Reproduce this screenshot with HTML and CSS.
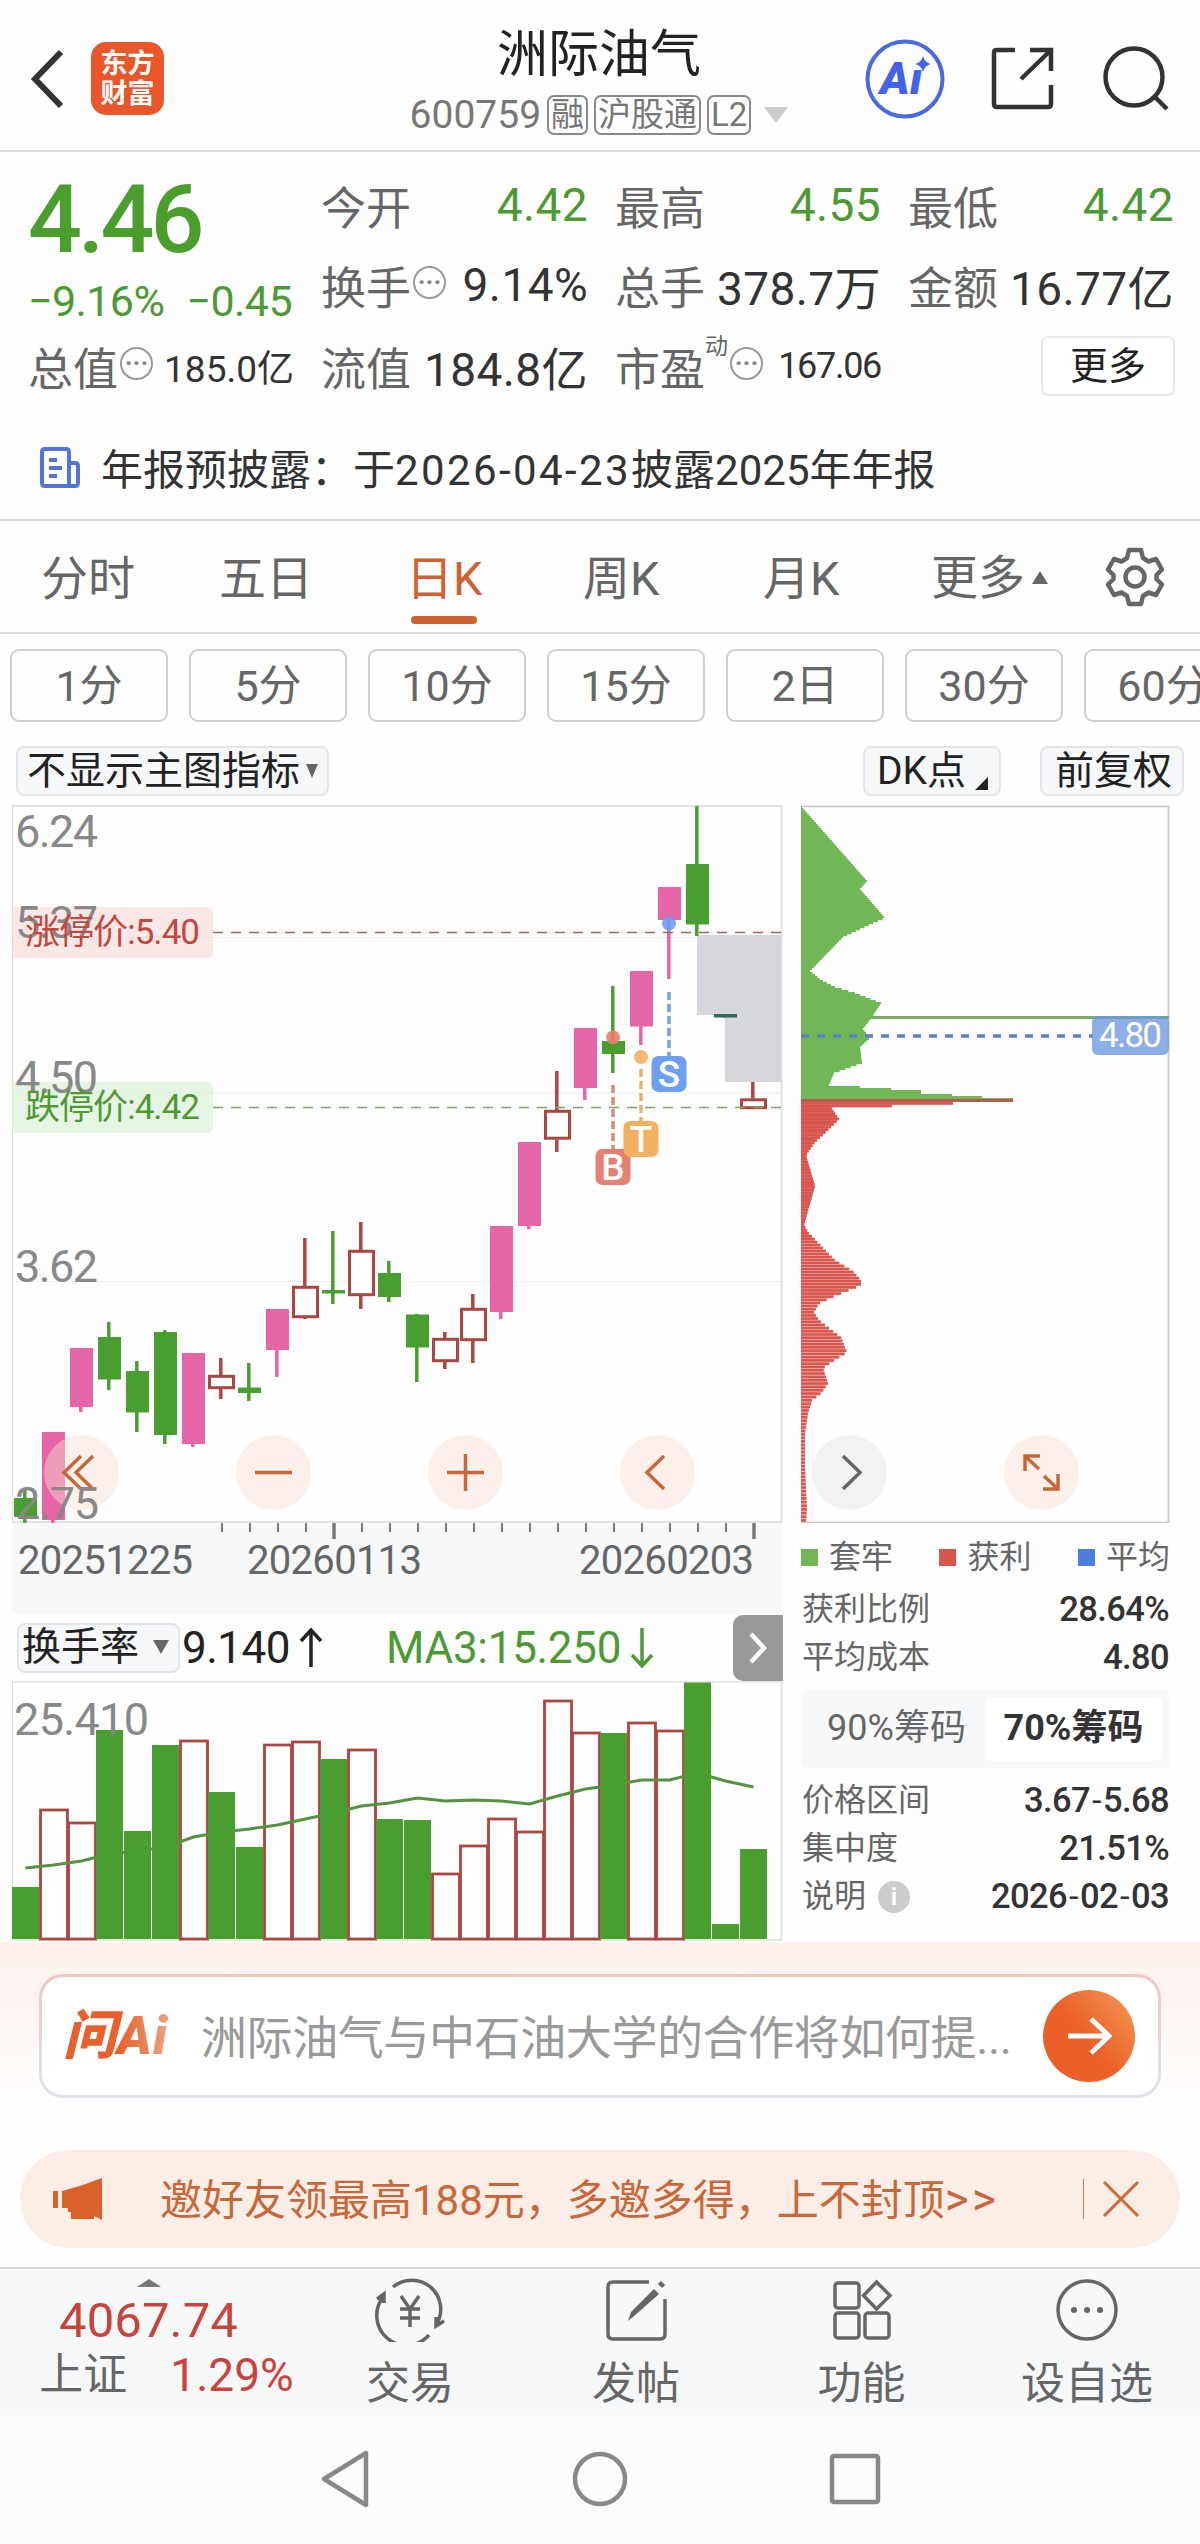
FILE: index.html
```
<!DOCTYPE html>
<html lang="zh-CN">
<head>
    <meta charset="UTF-8">
    <meta name="viewport" content="width=device-width, initial-scale=1.0">
    <title>洲际油气 600759</title>
    <link rel="stylesheet" href="styles.css">
</head>
<body>
    <!-- Header -->
    <header class="header">
        <svg class="back" width="36" height="60" viewBox="0 0 36 60"><path d="M31 3 L5 30 L31 57"/></svg>
        <div class="logo"><span>东方</span><span>财富</span></div>
        <div class="stock">
            <div class="stock-name">洲际油气</div>
            <div class="stock-code">
                <span class="code">600759</span>
                <span class="tag">融</span>
                <span class="tag">沪股通</span>
                <span class="tag">L2</span>
                <svg class="caret" width="24" height="16" viewBox="0 0 24 16"><path d="M0 0H24L12 16Z"/></svg>
            </div>
        </div>
        <div class="header-icons">
            <svg width="80" height="80" viewBox="0 0 80 80">
                <circle cx="40" cy="40" r="37.5" fill="none" stroke="#4a6be0" stroke-width="4"/>
                <text class="ai-text" x="15" y="55">Aı</text>
                <path d="M58 17 Q59.500 23.500 66 25 Q59.500 26.500 58 33 Q56.500 26.500 50 25 Q56.500 23.500 58 17Z" fill="#4262ea"/>
            </svg>
            <svg class="line-icon" width="66" height="66" viewBox="0 0 66 66">
                <path d="M25 4H7Q4 4 4 7V58Q4 61 7 61H58Q61 61 61 58V39M40 4H61V25M61 4L31 33"/>
            </svg>
            <svg class="line-icon" width="68" height="66" viewBox="0 0 68 66">
                <circle cx="32" cy="31" r="28.500"/><path d="M53 51L65 63"/>
            </svg>
        </div>
    </header>

    <!-- Quote -->
    <section class="quote">
        <div class="quote-main">
            <div class="price">4.46</div>
            <div class="change"><span>−9.16%</span><span>−0.45</span></div>
        </div>
        <div class="cell"><label>今开</label><b class="green">4.42</b></div>
        <div class="cell"><label>最高</label><b class="green">4.55</b></div>
        <div class="cell"><label>最低</label><b class="green">4.42</b></div>
        <div class="cell"><label>换手</label><i class="dots">···</i><b>9.14%</b></div>
        <div class="cell"><label>总手</label><b>378.7万</b></div>
        <div class="cell"><label>金额</label><b>16.77亿</b></div>
        <div class="cell small"><label>总值</label><i class="dots">···</i><b>185.0亿</b></div>
        <div class="cell"><label>流值</label><b>184.8亿</b></div>
        <div class="cell small pe"><label>市盈<sup>动</sup></label><i class="dots">···</i><b>167.06</b></div>
        <div class="cell"><button class="more">更多</button></div>
    </section>
    <div class="notice">
        <svg width="40" height="42" viewBox="0 0 40 42">
            <path d="M29 39V5Q29 2 26 2H5Q2 2 2 5V36Q2 39 5 39H35Q38 39 38 36V19Q38 16 35 16H29M9 13H17M9 21H22M9 29H17"/>
        </svg>
        <span>年报预披露：于<em>2026-04-23</em>披露2025年年报</span>
    </div>

    <!-- Period tabs -->
    <nav class="tabs">
        <span>分时</span>
        <span>五日</span>
        <span class="active">日K</span>
        <span>周K</span>
        <span>月K</span>
        <span class="tab-more">更多<svg width="16" height="13" viewBox="0 0 16 13"><path d="M8 0L16 13H0Z" fill="#666"/></svg></span>
        <svg class="gear" width="60" height="60" viewBox="0 0 60 60">
            <path d="M24 3H36L38 11L43.500 14.500L51 12L57 22.500L51.500 28V32L57 37.500L51 48L43.500 45.500L38 49L36 57H24L22 49L16.500 45.500L9 48L3 37.500L8.500 32V28L3 22.500L9 12L16.500 14.500L22 11Z"/>
            <circle cx="30" cy="30" r="9.500"/>
        </svg>
    </nav>
    <div class="pills">
        <span>1分</span><span>5分</span><span>10分</span><span>15分</span><span>2日</span><span>30分</span><span>60分</span>
    </div>
    <div class="indicators">
        <span class="chip">不显示主图指标<svg width="12" height="14" viewBox="0 0 12 14"><path d="M0 0H12L6 14Z" fill="#666"/></svg></span>
        <span class="chip dk">DK点<svg width="13" height="13" viewBox="0 0 13 13"><path d="M13 0V13H0Z" fill="#222"/></svg></span>
        <span class="chip fq">前复权</span>
    </div>

    <!-- Charts -->
    <main class="charts">
        <div class="left">
            <svg class="kline" id="kline" width="771" height="718" viewBox="12 805 771 718"></svg>
            <svg class="axis" id="axis" width="771" height="91" viewBox="12 1523 771 91"></svg>
            <div class="turnover">
                <span class="chip">换手率<svg width="16" height="14" viewBox="0 0 16 14"><path d="M0 0H16L8 14Z" fill="#666"/></svg></span>
                <span class="rate">9.140</span>
                <svg class="arrow" width="24" height="42" viewBox="0 0 24 42"><path d="M12 40V4M2 14L12 3L22 14" stroke="#222"/></svg>
                <span class="ma">MA3:15.250</span>
                <svg class="arrow" width="24" height="42" viewBox="0 0 24 42"><path d="M12 1V38M2 28L12 39L22 28" stroke="#4d9a35"/></svg>
                <div class="next"><svg width="18" height="32" viewBox="0 0 18 32"><path d="M2 2L15 16L2 30"/></svg></div>
            </div>
            <svg class="volume" id="volume" width="771" height="261" viewBox="12 1681 771 261"></svg>
        </div>
        <div class="right">
            <svg id="chips" width="370" height="718" viewBox="801 805 370 718"></svg>
            <div class="legend">
                <span><i class="sq g"></i>套牢</span>
                <span><i class="sq r"></i>获利</span>
                <span><i class="sq b"></i>平均</span>
            </div>
            <div class="row"><span>获利比例</span><b>28.64%</b></div>
            <div class="row"><span>平均成本</span><b>4.80</b></div>
            <div class="toggle"><span>90%筹码</span><span class="on">70%筹码</span></div>
            <div class="row"><span>价格区间</span><b>3.67<u>-</u>5.68</b></div>
            <div class="row"><span>集中度</span><b>21.51%</b></div>
            <div class="row"><span>说明<i class="info">i</i></span><b>2026<u>-</u>02<u>-</u>03</b></div>
        </div>
        <!-- Buttons floating over both charts -->
        <div class="tools">
            <svg viewBox="0 0 75 75"><path d="M37 21L20 37.500L37 54M49 21L32 37.500L49 54"/></svg>
            <svg viewBox="0 0 75 75"><path d="M19 37.500H56"/></svg>
            <svg viewBox="0 0 75 75"><path d="M19 37.500H56M37.500 19V56"/></svg>
            <svg viewBox="0 0 75 75"><path d="M44 21L27 37.500L44 54"/></svg>
            <svg class="grey" viewBox="0 0 75 75"><path d="M31 21L48 37.500L31 54"/></svg>
            <svg viewBox="0 0 75 75"><path d="M21 36V21H36M22 22L35 34M54 39V54H39M53 53L40 41"/></svg>
        </div>
        <div class="low">2.75</div>
    </main>

    <!-- Ask AI -->
    <section class="ask">
        <div class="ask-box">
            <span class="ask-logo">问Ai</span>
            <span class="ask-text">洲际油气与中石油大学的合作将如何提...</span>
            <div class="ask-go"><svg width="46" height="40" viewBox="0 0 46 40"><path d="M2 20H42M25 3L43 20L25 37"/></svg></div>
        </div>
    </section>

    <div class="banner">
        <svg class="horn" width="52" height="44" viewBox="0 0 52 44"><path d="M1 14H6V31H1ZM10 14L28 9L50 1V43L42 39V42H19V35H16V31H10Z"/></svg>
        <span class="banner-text">邀好友领最高188元，多邀多得，上不封顶<u>&gt;&gt;</u></span>
        <i class="sep"></i>
        <svg class="close" width="38" height="36" viewBox="0 0 38 36"><path d="M2 1L36 35M36 1L2 35"/></svg>
    </div>

    <!-- Bottom bar -->
    <footer class="bottom">
        <div class="index">
            <svg width="24" height="8" viewBox="0 0 24 8"><path d="M12 0L24 8H0Z" fill="#777"/></svg>
            <div class="index-value">4067.74</div>
            <div class="index-row"><span>上证</span><span class="red">1.29%</span></div>
        </div>
        <div class="item">
            <svg width="72" height="64" viewBox="0 0 72 64">
                <path d="M19 9A29 29 0 0 1 62 47M55 57A29 29 0 0 1 10 18M3 21L10 16V25M70 43L62 48V39"/>
                <path d="M27 18L36 31L45 18M36 31V49M26 31H46M26 40H46"/>
            </svg>
            <span>交易</span>
        </div>
        <div class="item">
            <svg width="64" height="64" viewBox="0 0 64 64">
                <path d="M45 4H9Q4 4 4 9V56Q4 61 9 61H56Q61 61 61 56V21"/>
                <path d="M24 43L27 34L50 11L55 16L29 39Z" fill="#666" stroke="none"/><path d="M56 8L59 5" stroke-width="6"/>
            </svg>
            <span>发帖</span>
        </div>
        <div class="item">
            <svg width="64" height="64" viewBox="0 0 64 64">
                <rect x="5" y="5" width="24" height="25" rx="3"/><rect x="5" y="35" width="24" height="25" rx="3"/><rect x="35" y="35" width="24" height="25" rx="3"/>
                <path d="M46.500 4L60 17.500L46.500 31L33.500 17.500Z"/>
            </svg>
            <span>功能</span>
        </div>
        <div class="item">
            <svg width="64" height="64" viewBox="0 0 64 64">
                <circle cx="32" cy="32" r="29"/>
                <path d="M19 32h.1M32 32h.1M45 32h.1" stroke-width="6" stroke-linecap="round"/>
            </svg>
            <span>设自选</span>
        </div>
    </footer>
    <div class="sysnav">
        <svg width="56" height="60" viewBox="0 0 56 60"><path d="M50 4V56L8 30Z"/></svg>
        <svg width="56" height="60" viewBox="0 0 56 60"><circle cx="28" cy="30" r="25"/></svg>
        <svg width="56" height="60" viewBox="0 0 56 60"><rect x="4" y="7" width="46" height="46" rx="2"/></svg>
    </div>

    <script src="script.js"></script>
</body>
</html>
```
FILE: styles.css
```
* {
    box-sizing: border-box;
}

body {
    margin: 0;
    width: 1200px;
    height: 2544px;
    overflow: hidden;
    background: #fefefe;
    color: #333;
    font-family: Roboto, "Noto Sans CJK SC", sans-serif;
}

svg {
    display: block;
    flex: none;
}

b, i, em, u {
    font-weight: normal;
    font-style: normal;
    text-decoration: none;
}

.green {
    color: #4d9a35;
}

.red {
    color: #c9433b;
}

/* header */
.header {
    display: grid;
    grid-template-columns: 61px 249px 518px 1fr;
    height: 152px;
    padding-left: 30px;
    border-bottom: 2px solid #dadada;
}

.back {
    margin-top: 49px;
    fill: none;
    stroke: #333;
    stroke-width: 6;
}

.logo {
    display: flex;
    flex-direction: column;
    justify-content: center;
    align-items: center;
    width: 73px;
    height: 73px;
    margin-top: 42px;
    border-radius: 15px;
    background: #e8562a;
    color: #fff;
    font-size: 27px;
    font-weight: bold;
    line-height: 30px;
}

.stock {
    display: flex;
    flex-direction: column;
    align-items: center;
    padding-top: 25px;
}

.stock-name {
    font-size: 51px;
    line-height: 60px;
    color: #222;
}

.stock-code {
    display: flex;
    align-items: center;
    gap: 6px;
    margin-top: 10px;
    height: 40px;
    color: #777;
}

.code {
    font-size: 39px;
}

.tag {
    height: 40px;
    padding: 0 2px;
    border: 2px solid #888;
    border-radius: 7px;
    font-size: 33px;
    line-height: 35px;
}

.caret {
    margin-left: 7px;
    fill: #ccc;
}

.header-icons {
    display: flex;
    align-items: center;
    gap: 45px;
    padding: 7px 0 0 7px;
}

.header-icons svg:last-child {
    margin-left: 1px;
}

.ai-text {
    font-family: Roboto;
    font-size: 45px;
    font-weight: 900;
    font-style: italic;
    fill: #4262ea;
}

.line-icon {
    fill: none;
    stroke: #333;
    stroke-width: 4.5;
}

/* quote */
.quote {
    display: grid;
    grid-template-columns: 264px 265px 264px 264px;
    grid-template-rows: 80px 81px 80px;
    column-gap: 29px;
    width: 1200px;
    height: 256px;
    padding: 13px 0 0 28px;
}

.quote-main {
    grid-row: span 2;
}

.price {
    height: 102px;
    padding-top: 4px;
    color: #4a9e2e;
    font-size: 95px;
    font-weight: 500;
    line-height: 102px;
    letter-spacing: -4px;
}

.change {
    display: flex;
    justify-content: space-between;
    padding-top: 6px;
    color: #4d9a35;
    font-size: 43px;
    letter-spacing: -0.6px;
    line-height: 56px;
}

.cell {
    display: flex;
    align-items: center;
    height: 80px;
    font-size: 45px;
}

.cell label {
    position: relative;
    color: #666;
}

.cell b {
    margin-left: auto;
    margin-right: -2px;
    font-size: 46px;
    letter-spacing: 0.4px;
}

.cell.small b {
    font-size: 37px;
    letter-spacing: 0;
}

.cell.pe b {
    font-size: 36px;
    letter-spacing: -1.3px;
}

.cell sup {
    position: absolute;
    left: 90px;
    top: 1px;
    font-size: 23px;
    line-height: 24px;
}

.dots {
    width: 33px;
    height: 33px;
    margin: -6px 0 0 2px;
    border: 2px solid #999;
    border-radius: 50%;
    color: #888;
    font-size: 26px;
    font-weight: bold;
    line-height: 28px;
    text-align: center;
}

.pe .dots {
    margin-left: 25px;
}

.more {
    width: 134px;
    height: 60px;
    margin-left: auto;
    margin-right: -3px;
    margin-top: -1px;
    padding: 0;
    border: 2px solid #e6e6e6;
    border-radius: 7px;
    background: #fff;
    color: #222;
    font: inherit;
    font-size: 38px;
    line-height: 52px;
}

.notice {
    display: flex;
    align-items: center;
    height: 113px;
    padding: 6px 0 0 40px;
    border-bottom: 2px solid #dadada;
    font-size: 42px;
    gap: 21px;
}

.notice svg {
    margin-top: 3px;
    fill: none;
    stroke: #5474dc;
    stroke-width: 4;
}

.notice em {
    letter-spacing: 2.4px;
}

/* tabs */
.tabs {
    display: grid;
    grid-template-columns: 178px 187px 177px 180px 165px 177px 1fr;
    height: 113px;
    padding-left: 41px;
    border-bottom: 2px solid #dadada;
    color: #666;
    font-size: 47px;
    line-height: 115px;
}

.tabs .active {
    color: #cf6130;
}

.tabs .active::after {
    content: "";
    display: block;
    width: 66px;
    height: 8px;
    margin: -20px 0 0 5px;
    border-radius: 4px;
    background: #cf6130;
}

.tab-more {
    display: flex;
    align-items: center;
    gap: 7px;
    height: 113px;
    margin-left: 3px;
}

.gear {
    margin-top: 26px;
    fill: none;
    stroke: #666;
    stroke-width: 4.5;
    stroke-linejoin: round;
}

.pills {
    display: flex;
    gap: 21px;
    padding: 15px 0 0 10px;
    overflow: hidden;
}

.pills span {
    flex: none;
    width: 158px;
    height: 73px;
    border: 2px solid #cfcfcf;
    border-radius: 9px;
    color: #666;
    font-size: 43px;
    line-height: 71px;
    text-align: center;
}

.indicators {
    display: flex;
    align-items: center;
    height: 83px;
    padding: 15px 16px 0 16px;
}

.chip {
    display: flex;
    align-items: center;
    height: 50px;
    padding: 0 9px 1px;
    border: 2px solid #e3e5e8;
    border-radius: 8px;
    background: #f7f8fa;
    color: #222;
    font-size: 39px;
    line-height: 44px;
    white-space: nowrap;
}

.chip svg {
    margin-left: 6px;
}

.dk {
    width: 138px;
    margin-left: auto;
    padding: 0 0 1px 12px;
}

.dk svg {
    margin: 26px 0 0 9px;
}

.fq {
    width: 144px;
    margin-left: 39px;
    padding-left: 13px;
}

/* charts */
.charts {
    position: relative;
    display: flex;
    gap: 18px;
    height: 1137px;
    padding-left: 12px;
}

.left {
    width: 771px;
}

svg text {
    font-family: Roboto, "Noto Sans CJK SC", sans-serif;
}

.axis {
    background: #f7f8fa;
}

.scale {
    font-size: 45px;
    fill: #888;
}

.date {
    font-size: 40px;
    fill: #666;
}

.limit {
    font-size: 35px;
}

.mark {
    font-size: 37px;
    font-weight: 500;
    fill: #fff;
    text-anchor: middle;
}

.turnover {
    display: flex;
    align-items: center;
    height: 67px;
    padding-left: 5px;
    font-size: 44px;
}

.turnover .chip {
    width: 163px;
    padding: 0 5px 2px 3px;
}

.turnover .chip svg {
    margin-left: 14px;
}

.rate {
    margin-left: 2px;
    color: #222;
    letter-spacing: -0.5px;
}

.arrow {
    margin-left: 9px;
    fill: none;
    stroke-width: 3.5;
}

.ma {
    margin-left: 63px;
    color: #4d9a35;
    letter-spacing: -0.3px;
}

.next {
    display: flex;
    align-items: center;
    justify-content: center;
    width: 50px;
    height: 66px;
    margin-left: auto;
    border-radius: 10px 0 0 10px;
    background: #999;
}

.next svg {
    fill: none;
    stroke: #fff;
    stroke-width: 4.5;
}

.right {
    width: 369px;
}

.legend {
    display: flex;
    justify-content: space-between;
    height: 62px;
    padding-top: 11px;
    color: #666;
    font-size: 32px;
    line-height: 46px;
}

.legend span {
    display: flex;
    align-items: center;
    height: 46px;
}

.sq {
    width: 17px;
    height: 17px;
    margin-right: 11px;
}

.sq.g { background: #72b755; }
.sq.r { background: #d8564e; }
.sq.b { background: #4a80dc; }

.row {
    display: flex;
    justify-content: space-between;
    height: 48px;
    padding: 0 1px 0 1px;
    color: #666;
    font-size: 32px;
    line-height: 48px;
}

.row b {
    color: #333;
    font-size: 34.5px;
    font-weight: 500;
    letter-spacing: -0.6px;
}

.row u {
    margin: 0 2px;
}

.toggle {
    display: flex;
    height: 78px;
    margin: 9px 0 8px;
    padding: 7px;
    border-radius: 7px;
    background: #f7f8fa;
    color: #666;
    font-size: 36px;
    line-height: 63px;
}

.toggle span {
    width: 177px;
    text-align: center;
}

.toggle .on {
    border-radius: 7px;
    background: #fff;
    color: #333;
    font-weight: bold;
}

.info {
    display: inline-block;
    width: 32px;
    height: 32px;
    margin-left: 12px;
    border-radius: 50%;
    background: #ccc;
    color: #fff;
    font-size: 24px;
    font-weight: bold;
    line-height: 32px;
    text-align: center;
    vertical-align: 2px;
}

.tools {
    position: absolute;
    left: 44px;
    top: 630px;
    display: flex;
    gap: 117px;
}

.tools svg {
    width: 75px;
    height: 75px;
    border-radius: 50%;
    background: rgba(248, 225, 210, .45);
    fill: none;
    stroke: #c7683a;
    stroke-width: 3.5;
}

.tools .grey {
    background: #f2f2f2;
    stroke: #666;
}

/* lowest price label, above the round buttons */
.low {
    position: absolute;
    left: 15px;
    top: 674px;
    color: #888;
    font-size: 45px;
    line-height: 50px;
    letter-spacing: -1.2px;
}

/* ask ai */
.ask {
    height: 208px;
    padding: 32px 39px 0;
    background: linear-gradient(#fdf1ed, #fefefe 85%);
}

.ask-box {
    display: flex;
    align-items: center;
    height: 124px;
    padding: 0 23px 0 21px;
    border: 3px solid transparent;
    border-radius: 24px;
    background: linear-gradient(#fff, #fff) padding-box, linear-gradient(#edc8c0, #dfe4ef) border-box;
}

.ask-logo {
    width: 138px;
    background: linear-gradient(90deg, #e8602c 40%, #eba07c 75%);
    background-clip: text;
    color: transparent;
    font-size: 53px;
    font-weight: 900;
    font-style: italic;
    letter-spacing: 1px;
    line-height: 60px;
}

.ask-text {
    padding-bottom: 5px;
    color: #999;
    font-size: 46px;
    letter-spacing: -0.4px;
    white-space: nowrap;
}

.ask-go {
    display: flex;
    align-items: center;
    justify-content: center;
    width: 92px;
    height: 92px;
    margin-left: auto;
    border-radius: 50%;
    background: linear-gradient(50deg, #eb5f28 45%, #f29a55);
}

.ask-go svg {
    fill: none;
    stroke: #fff;
    stroke-width: 5;
}

.banner {
    display: flex;
    align-items: center;
    height: 98px;
    margin: 0 20px 19px;
    padding: 0 40px 0 32px;
    border-radius: 49px;
    background: #fbeee6;
    color: #c8673a;
    font-size: 42px;
}

.horn {
    fill: #d9622c;
}

.banner-text {
    margin-left: 56px;
    padding-bottom: 6px;
}

.banner-text u {
    letter-spacing: 3px;
    font-size: 46px;
    line-height: 42px;
}

.sep {
    width: 1px;
    height: 40px;
    margin-left: auto;
    margin-right: 18px;
    background: #cf8055;
}

.close {
    fill: none;
    stroke: #d0693c;
    stroke-width: 3;
}

/* bottom bar */
.bottom {
    display: grid;
    grid-template-columns: 297px 226px 226px 225px 226px;
    height: 148px;
    border-top: 2px solid #d5d8dc;
    background: #f7f8fa;
}

.index {
    display: flex;
    flex-direction: column;
    align-items: center;
    padding-top: 10px;
}

.index-value {
    margin-top: 4px;
    color: #c9433b;
    font-size: 49px;
    letter-spacing: 0.1px;
    line-height: 59px;
}

.index-row {
    display: flex;
    gap: 43px;
    margin-left: 36px;
    color: #666;
    font-size: 44px;
    line-height: 50px;
}

.index-row .red {
    color: #c9433b;
    font-size: 46px;
}

.item {
    display: flex;
    flex-direction: column;
    align-items: center;
    padding-top: 9px;
    color: #666;
    font-size: 44px;
    line-height: 84px;
}

.item svg {
    fill: none;
    stroke: #666;
    stroke-width: 3.5;
}

.sysnav {
    display: flex;
    justify-content: center;
    gap: 200px;
    height: 129px;
    padding-top: 34px;
    background: #fcfcfc;
}

.sysnav svg {
    fill: none;
    stroke: #888;
    stroke-width: 4.5;
    stroke-linejoin: round;
}
```
FILE: script.js
```
const GREEN = '#489e2e';
const PINK = '#e565a7';
const RED = '#ab4740';

// [type, high, bodyTop, bodyBottom, low]  g = down, p = limit up, r = up
const candles = [
    ['g', 1490, 1498, 1517, 1523], ['p', 1432, 1432, 1520, 1523], ['p', 1348, 1348, 1407, 1412],
    ['g', 1322, 1337, 1379.5, 1390], ['g', 1361, 1371, 1412.5, 1432], ['g', 1330, 1332, 1435, 1444],
    ['p', 1353, 1353, 1444, 1447], ['r', 1358, 1375, 1389, 1399], ['g', 1363, 1387.5, 1393, 1401],
    ['p', 1309, 1309, 1350, 1377], ['r', 1238, 1286, 1318, 1319], ['g', 1231, 1290, 1293.5, 1304],
    ['r', 1222, 1250, 1296, 1309], ['g', 1261, 1273, 1297, 1302], ['g', 1314, 1314.5, 1347.5, 1382],
    ['r', 1332, 1338, 1362, 1369], ['r', 1294, 1308, 1341, 1363], ['p', 1226, 1226, 1312, 1319],
    ['p', 1142, 1142, 1226, 1229], ['r', 1071, 1110, 1139.5, 1152], ['p', 1028, 1028, 1088, 1100],
    ['g', 986, 1041, 1054, 1073], ['p', 971, 971, 1026.5, 1045], ['p', 887, 887, 920, 979],
    ['g', 806, 864, 924.5, 936], ['n', 1014, 1014, 1017.5, 1017.5], ['r', 1082, 1098.5, 1109, 1109]
];

const volumes = [
    ['g', 1887], ['r', 1810], ['r', 1823], ['g', 1730], ['g', 1831], ['g', 1745], ['r', 1741], ['g', 1792], ['g', 1847],
    ['r', 1745], ['r', 1742], ['g', 1759], ['r', 1750], ['g', 1819], ['g', 1820], ['r', 1874], ['r', 1846], ['r', 1819],
    ['r', 1832], ['r', 1701], ['r', 1733], ['g', 1733], ['r', 1723], ['r', 1731], ['g', 1682.5], ['g', 1924], ['g', 1849]
];
const ma = [1868, 1865, 1861, 1854, 1851, 1847, 1837, 1832, 1829, 1825, 1819, 1813, 1806, 1803,
    1798, 1801, 1800, 1801, 1804, 1796, 1789, 1785, 1780, 1780, 1773, 1781, 1787];

function rect(x, y, w, h, fill, extra = '') {
    return `<rect x="${x}" y="${y}" width="${w}" height="${h}" fill="${fill}" ${extra}/>`;
}

function line(x1, y1, x2, y2, color, width, dash = '') {
    return `<line x1="${x1}" y1="${y1}" x2="${x2}" y2="${y2}" stroke="${color}" stroke-width="${width}" stroke-dasharray="${dash}"/>`;
}

function text(x, y, cls, str, extra = '') {
    return `<text x="${x}" y="${y}" class="${cls}" ${extra}>${str}</text>`;
}

function drawKline() {
    let s = '';
    // frame and grid
    [937.5, 1093, 1281.5].forEach(y => s += line(12, y, 781, y, '#ddd', 1, '1 1'));
    s += line(12, 806, 782, 806, '#e4e4e4', 2) + line(12.5, 805, 12.5, 1522, '#ddd', 1);
    s += line(781.5, 805, 781.5, 1522, '#e2e2e2', 2) + line(12, 1522, 782, 1522, '#e2e2e2', 2);
    // gaps
    s += rect(697, 935, 84, 80, '#d5d7dc') + rect(725, 1014, 56, 68, '#d5d7dc');

    candles.forEach(([type, high, top, bottom, low], i) => {
        const x = 24.8 + 28 * i;
        const color = { g: GREEN, p: PINK, r: RED, n: '#33675a' }[type];
        if (type === 'r') {
            s += line(x, high, x, top, color, 3.5) + line(x, bottom, x, low, color, 3.5);
            s += rect(x - 11.3, top + 1.3, 24, bottom - top - 2.6, '#fff', `stroke="${color}" stroke-width="3"`);
        } else {
            s += line(x, high, x, low, color, 3.5) + rect(x - 10.8, top, 23, bottom - top, color);
        }
    });

    // limit prices
    s += line(213, 932.5, 782, 932.5, '#a3635b', 1.3, '10 8') + line(213, 1107.5, 782, 1107.5, '#7ba56b', 1.3, '10 8');
    s += '<path d="M12 907H207Q213 907 213 913V952Q213 958 207 958H12Z" fill="#f6d8d6" fill-opacity=".6"/>';
    s += '<path d="M12 1082H207Q213 1082 213 1088V1127Q213 1133 207 1133H12Z" fill="#d9eed6" fill-opacity=".65"/>';
    [['6.24', 847], ['5.37', 938], ['4.50', 1093], ['3.62', 1282]].forEach(([v, y]) => {
        s += text(15, y, 'scale', v, 'textLength="83"');
    });
    s += text(25, 944, 'limit', '涨停价:5.40', 'fill="#c2483f" textLength="175"');
    s += text(25, 1119, 'limit', '跌停价:4.42', 'fill="#4d9a35" textLength="175"');

    // trade marks
    [['B', 613, 1037.5, 1085, 1149, '#e68070', '#d88b7d'], ['T', 641, 1057, 1069, 1121, '#f2b160', '#e3b568'], ['S', 669, 923.5, 992, 1056, '#6f9ff0', '#75a2de']].forEach(([c, x, dot, from, y, fill, dash]) => {
        s += `<circle cx="${x}" cy="${dot}" r="7" fill="${fill}" fill-opacity=".9"/>`;
        s += line(x, from, x, y, dash, 3.5, '8 4');
        s += rect(x - 17.5, y, 35, 36, fill, 'rx="7"') + text(x, y + 31, 'mark', c);
    });
    document.getElementById('kline').innerHTML = s;
}

function drawAxis() {
    let s = '';
    for (let i = 7; i < 27; i++) {
        const major = i === 11 || i === 26;
        const x = 26 + 28 * i;
        s += line(x, 1523, x, major ? 1539 : 1532, '#777', major ? 3.5 : 2);
    }
    s += text(18, 1574, 'date', '20251225', 'textLength="175"');
    s += text(247, 1574, 'date', '20260113', 'textLength="175"');
    s += text(579, 1574, 'date', '20260203', 'textLength="175"');
    document.getElementById('axis').innerHTML = s;
}

function drawVolume() {
    let s = line(12, 1681.5, 782, 1681.5, '#e2e2e2', 2) + line(12.5, 1681, 12.5, 1940, '#ddd', 1);
    s += line(781.5, 1681, 781.5, 1940, '#e2e2e2', 2) + line(12, 1940, 782, 1940, '#dfeadb', 2);
    const points = ma.map((y, i) => `${25.5 + 28 * i},${y}`).join(' ');
    volumes.forEach(([type, y], i) => {
        if (type === 'r') s += rect(12.5 + 28 * i, y, 27, 1939 - y, '#fff', `stroke="${RED}" stroke-width="2.8"`);
    });
    s += `<polyline points="${points}" fill="none" stroke="#559342" stroke-width="3"/>`;
    volumes.forEach(([type, y], i) => {
        if (type === 'g') s += rect(12 + 28 * i, y, 27, 1939 - y, GREEN);
    });
    s += text(14, 1735, 'scale', '25.410', 'textLength="135"');
    document.getElementById('volume').innerHTML = s;
}

// chip distribution outline: [y, width]
const outline = [
    [806, 0], [881, 66], [889, 59], [918, 84], [923, 72], [937, 42], [971, 9], [980, 20], [987, 34], [993, 54],
    [1003, 80], [1017, 71], [1029, 62], [1038, 69], [1047, 59], [1063, 61], [1073, 33], [1085, 28],
    [1085.1, 59], [1088, 59], [1088.1, 90], [1090.5, 90], [1090.6, 120], [1093, 120], [1093.1, 151], [1096, 151],
    [1096.1, 181], [1098.9, 181], [1099, 212], [1102, 212], [1102.1, 151], [1104.5, 151], [1104.6, 90], [1107, 90],
    [1107.1, 29], [1119, 37], [1143, 12], [1155, 4], [1186, 13], [1210, 6], [1225, 2], [1233, 7], [1260, 33],
    [1271, 51], [1280, 59], [1285, 59], [1292, 42], [1297, 30], [1303, 17], [1312, 12], [1320, 17], [1327, 26],
    [1337, 39], [1352, 45], [1362, 29], [1368, 21], [1383, 26], [1392, 20], [1400, 10], [1413, 6], [1433, 3],
    [1467, 3], [1490, 4], [1508, 5], [1523, 4]
];

function drawChips() {
    const width = y => {
        const k = outline.findIndex(p => p[0] >= y);
        if (k < 1) return outline[0][1];
        const [y0, w0] = outline[k - 1], [y1, w1] = outline[k];
        return w0 + (w1 - w0) * (y - y0) / (y1 - y0);
    };
    let s = line(801, 806.5, 1169, 806.5, '#c8c8c8', 1.5) + line(1168.5, 806, 1168.5, 1523, '#ccc', 2);
    s += line(801, 1522.5, 1169, 1522.5, '#c8c8c8', 1.5) + line(801.5, 806, 801.5, 1523, '#aaa', 1);
    s += line(860, 1017.5, 1169, 1017.5, '#7bad69', 3);
    for (let y = 806; y < 1099; y += 2) s += rect(801, y, width(y + 1), 2.2, '#72b755');
    // bars get sparser towards the low prices
    let y = 1102;
    while (y < 1520) {
        const step = 2.6 + (y - 1102) / 380;
        const w = width(y + 1) + 1;
        s += rect(801, y, w, step, y < 1240 ? '#dc6b65' : '#f3bdb9') + rect(801, y, w, 2.6, '#d8564e');
        y += step;
    }
    s += rect(801, 1099, 212, 3, '#b95b50');
    s += line(801, 1036, 1093, 1036, '#5a81bd', 3.5, '8 8');
    s += rect(1092, 1016, 77, 39, '#6e99de', 'rx="6" fill-opacity=".78"');
    s += text(1099, 1047, '', '4.80', 'font-size="35" fill="#fff" textLength="63"');
    document.getElementById('chips').innerHTML = s;
}

drawKline();
drawAxis();
drawVolume();
drawChips();
```
